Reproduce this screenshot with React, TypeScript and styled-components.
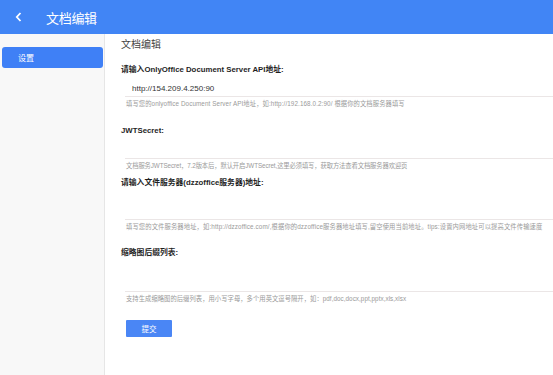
import { createGlobalStyle } from "styled-components";
import styled from "styled-components";

const GlobalStyle = createGlobalStyle`
  html, body {
    margin: 0;
    padding: 0;
    background: #ffffff;
    font-family: "Liberation Sans", "Noto Sans CJK SC", sans-serif;
  }
`;

/* ================= HEADER ================= */
const Page = styled.div`
  width: 553px;
  height: 375px;
  display: flex;
  flex-direction: column;
  overflow: hidden;
`;

const Header = styled.div`
  height: 34px;
  flex: none;
  background: #4185f5;
  display: flex;
  align-items: center;
  color: #ffffff;
`;

const BackButton = styled.div`
  width: 46px;
  height: 34px;
  display: flex;
  align-items: center;
  padding-left: 15px;
  box-sizing: border-box;
`;

const HeaderTitle = styled.h1`
  margin: 0;
  font-size: 13px;
  font-weight: 400;
  letter-spacing: -0.3px;
`;

/* ================= BODY ================= */
const Body = styled.div`
  flex: 1;
  display: flex;
  min-height: 0;
`;

const Sidebar = styled.div`
  width: 105px;
  flex: none;
  background: #f8f8f8;
  border-right: 1px solid #e6e6e6;
  padding: 13px 1px 0 2px;
  box-sizing: border-box;
`;

const MenuItem = styled.div<{ active?: boolean }>`
  height: 21px;
  border-radius: 3px;
  background: ${(p) => (p.active ? "#3f80f6" : "transparent")};
  color: ${(p) => (p.active ? "#ffffff" : "#333333")};
  font-size: 8px;
  display: flex;
  align-items: center;
  padding-left: 16px;
`;

const Main = styled.div`
  flex: 1;
  padding: 4px 0 0 16px;
  overflow: hidden;
  color: #333333;
`;

const PageTitle = styled.h2`
  margin: 0;
  font-size: 10px;
  line-height: 14px;
  font-weight: 400;
  color: #444444;
`;

/* ================= FORM ================= */
const Field = styled.div<{ gap: number }>`
  margin-top: ${(p) => p.gap}px;
`;

const Label = styled.div`
  font-size: 7.8px;
  line-height: 10px;
  font-weight: 700;
  color: #1f1f1f;
`;

const Input = styled.input<{ h: number }>`
  display: block;
  box-sizing: border-box;
  width: calc(100% - 4px);
  margin-left: 4px;
  height: ${(p) => p.h}px;
  padding: ${(p) => p.h - 16}px 0 0 7px;
  border: none;
  border-bottom: 1px solid #ebe6e6;
  outline: none;
  font-family: "Liberation Sans", "Noto Sans CJK SC", sans-serif;
  font-size: 8px;
  color: #333333;
  background: transparent;
`;

const Help = styled.div<{ spread: number }>`
  margin: 2px 0 0 5px;
  font-size: 6.3px;
  line-height: 10px;
  letter-spacing: ${(p) => p.spread}px;
  color: #9a9a9a;
  white-space: nowrap;
`;

const SubmitButton = styled.button`
  margin: 16px 0 0 5px;
  width: 46px;
  height: 17px;
  border: none;
  border-radius: 1px;
  background: #4a86f5;
  color: #ffffff;
  font-family: "Liberation Sans", "Noto Sans CJK SC", sans-serif;
  font-size: 7.5px;
  padding: 0;
`;

const fields = [
  {
    gap: 13,
    h: 22,
    spread: 0.1,
    label: "请输入OnlyOffice Document Server API地址:",
    value: "http://154.209.4.250:90",
    help: "填写您的onlyoffice Document Server API地址，如:http://192.168.0.2:90/ 根据你的文档服务器填写",
  },
  {
    gap: 17,
    h: 23,
    spread: -0.1,
    label: "JWTSecret:",
    value: "",
    help: "文档服务JWTSecret，7.2版本后，默认开启JWTSecret,这里必须填写，获取方法查看文档服务器欢迎页",
  },
  {
    gap: 7,
    h: 32,
    spread: 0.12,
    label: "请输入文件服务器(dzzoffice服务器)地址:",
    value: "",
    help: "填写您的文件服务器地址，如:http://dzzoffice.com/,根据你的dzzoffice服务器地址填写,留空使用当前地址。tips:设置内网地址可以提高文件传输速度",
  },
  {
    gap: 16,
    h: 34,
    spread: 0.05,
    label: "缩略图后缀列表:",
    value: "",
    help: "支持生成缩略图的后缀列表，用小写字母，多个用英文逗号隔开，如：pdf,doc,docx,ppt,pptx,xls,xlsx",
  },
];

export default function App() {
  return (
    <Page>
      <GlobalStyle />
      <Header>
        <BackButton>
          <svg width="7" height="10" viewBox="0 0 7 10" fill="none">
            <path d="M5.5 1 L1.8 5 L5.5 9" stroke="#ffffff" strokeWidth="1.8" />
          </svg>
        </BackButton>
        <HeaderTitle>文档编辑</HeaderTitle>
      </Header>
      <Body>
        <Sidebar>
          <MenuItem active>设置</MenuItem>
        </Sidebar>
        <Main>
          <PageTitle>文档编辑</PageTitle>
          {fields.map((f) => (
            <Field key={f.label} gap={f.gap}>
              <Label>{f.label}</Label>
              <Input h={f.h} defaultValue={f.value} />
              <Help spread={f.spread}>{f.help}</Help>
            </Field>
          ))}
          <SubmitButton>提交</SubmitButton>
        </Main>
      </Body>
    </Page>
  );
}
